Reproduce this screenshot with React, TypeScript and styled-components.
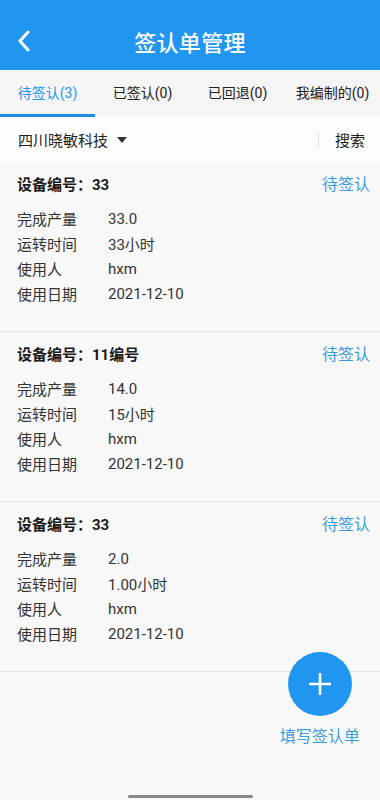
import { VFC } from 'react';
import styled, { createGlobalStyle } from 'styled-components';

type Record = {
  code: string;
  output: string;
  hours: string;
  user: string;
  date: string;
};

const records: Record[] = [
  { code: '33', output: '33.0', hours: '33小时', user: 'hxm', date: '2021-12-10' },
  { code: '11编号', output: '14.0', hours: '15小时', user: 'hxm', date: '2021-12-10' },
  { code: '33', output: '2.0', hours: '1.00小时', user: 'hxm', date: '2021-12-10' },
];

const tabs = ['待签认(3)', '已签认(0)', '已回退(0)', '我编制的(0)'];

const App: VFC = () => {
  return (
    <>
      <GlobalStyle />
      <Page>
        <Header>
          <BackButton>
            <svg width="14" height="22" viewBox="0 0 14 22">
              <polyline
                points="11,2 3,11 11,20"
                fill="none"
                stroke="#fff"
                strokeWidth="3"
                strokeLinecap="round"
                strokeLinejoin="round"
              />
            </svg>
          </BackButton>
          <Title>签认单管理</Title>
        </Header>
        <TabBar>
          {tabs.map((t, i) => (
            <Tab key={t} active={i === 0}>
              {t}
            </Tab>
          ))}
        </TabBar>
        <FilterRow>
          <Company>
            四川晓敏科技
            <Caret />
          </Company>
          <Search>搜索</Search>
        </FilterRow>
        {records.map((r, i) => (
          <Card key={i}>
            <CardHead>
              <CardTitle>设备编号：{r.code}</CardTitle>
              <Status>待签认</Status>
            </CardHead>
            <Row>
              <Label>完成产量</Label>
              <Value>{r.output}</Value>
            </Row>
            <Row>
              <Label>运转时间</Label>
              <Value>{r.hours}</Value>
            </Row>
            <Row>
              <Label>使用人</Label>
              <Value>{r.user}</Value>
            </Row>
            <Row>
              <Label>使用日期</Label>
              <Value>{r.date}</Value>
            </Row>
          </Card>
        ))}
        <Fab>
          <FabButton>
            <svg width="24" height="24" viewBox="0 0 24 24">
              <path d="M12 1v22M1 12h22" stroke="#fff" strokeWidth="2.6" />
            </svg>
          </FabButton>
          <FabLabel>填写签认单</FabLabel>
        </Fab>
        <HomeBar />
      </Page>
    </>
  );
};

const GlobalStyle = createGlobalStyle`
  html, body {
    margin: 0;
    padding: 0;
    background: #f8f8f8;
  }
  body {
    font-family: Roboto, "Noto Sans CJK SC", sans-serif;
    color: #333;
  }
`;

const Page = styled.div`
  min-height: 800px;
  background: #f8f8f8;
`;

const Header = styled.header`
  position: relative;
  height: 58px;
  padding-top: 12px;
  background: #2196f0;
  display: flex;
  align-items: center;
  justify-content: center;
`;

const BackButton = styled.div`
  position: absolute;
  left: 17px;
  top: 30px;
  display: flex;
`;

const Title = styled.h1`
  margin: 0;
  font-size: 22px;
  font-weight: 500;
  color: #fff;
  letter-spacing: 0.3px;
`;

const TabBar = styled.nav`
  display: flex;
  background: #f5f5f5;
`;

const Tab = styled.div<{ active?: boolean }>`
  flex: 1;
  height: 44px;
  display: flex;
  align-items: center;
  justify-content: center;
  font-size: 14px;
  color: ${(p) => (p.active ? '#2196f0' : '#222')};
  border-bottom: 3px solid ${(p) => (p.active ? '#1f8ae6' : 'transparent')};
  white-space: nowrap;
`;

const FilterRow = styled.div`
  height: 45px;
  display: flex;
  align-items: center;
  justify-content: space-between;
  padding: 0 15px 0 18px;
  background: #fdfdfd;
`;

const Company = styled.div`
  display: flex;
  align-items: center;
  font-size: 15px;
  color: #222;
`;

const Caret = styled.span`
  margin-left: 9px;
  width: 0;
  height: 0;
  border-left: 5px solid transparent;
  border-right: 5px solid transparent;
  border-top: 6px solid #333;
`;

const Search = styled.div`
  display: flex;
  align-items: center;
  font-size: 15px;
  color: #222;
  &::before {
    content: '';
    width: 1px;
    height: 18px;
    background: #ddd;
    margin-right: 16px;
  }
`;

const Card = styled.section`
  padding: 11px 10px 25px 17px;
  background: #f8f8f8;
  border-bottom: 1px solid #e6e6e6;
`;

const CardHead = styled.div`
  height: 20px;
  display: flex;
  align-items: center;
  justify-content: space-between;
  margin-bottom: 13px;
`;

const CardTitle = styled.div`
  font-size: 15px;
  font-weight: 700;
  color: #1a1a1a;
`;

const Status = styled.div`
  font-size: 16px;
  color: #3a9be0;
`;

const Row = styled.div`
  height: 25px;
  display: flex;
  align-items: center;
  font-size: 15px;
`;

const Label = styled.span`
  width: 91px;
  color: #333;
`;

const Value = styled.span`
  color: #333;
`;

const Fab = styled.div`
  position: fixed;
  right: 20px;
  bottom: 52px;
  width: 80px;
  display: flex;
  flex-direction: column;
  align-items: center;
  gap: 10px;
`;

const FabButton = styled.div`
  width: 64px;
  height: 64px;
  border-radius: 50%;
  background: #2196f0;
  display: flex;
  align-items: center;
  justify-content: center;
`;

const FabLabel = styled.div`
  font-size: 16px;
  line-height: 22px;
  color: #3a9be0;
  white-space: nowrap;
`;

const HomeBar = styled.div`
  position: fixed;
  left: 128px;
  bottom: 2px;
  width: 125px;
  height: 3px;
  border-radius: 2px;
  background: #8a8a8a;
`;

export default App;
